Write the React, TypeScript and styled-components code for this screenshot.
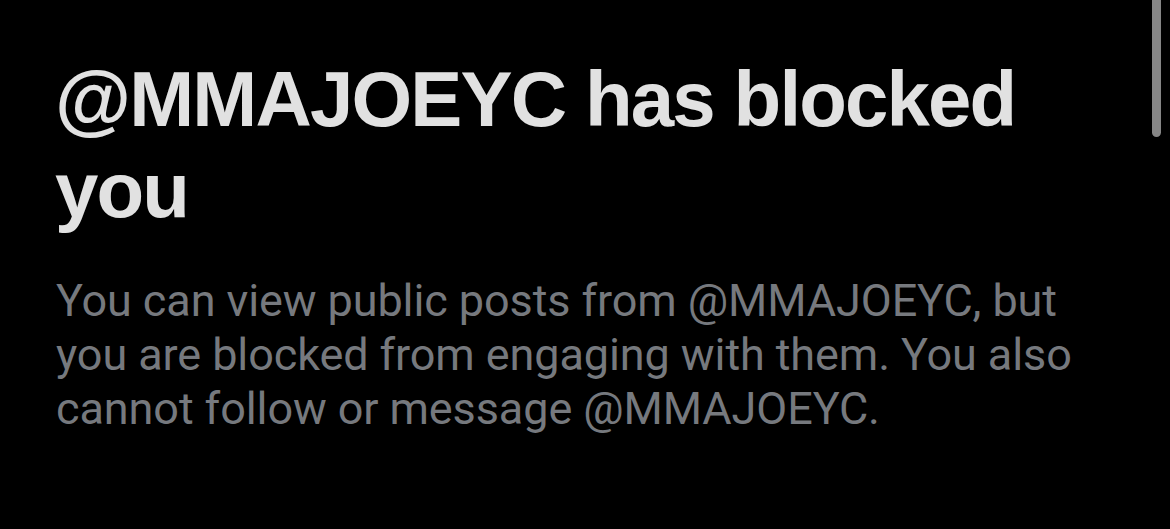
import styled, { createGlobalStyle } from "styled-components";

const Global = createGlobalStyle`
  html, body {
    margin: 0;
    padding: 0;
    background: #000;
  }
`;

const Screen = styled.div`
  width: 1170px;
  height: 529px;
  background: #000;
  position: relative;
  overflow: hidden;
  display: flex;
  flex-direction: column;
  padding: 54px 0 0 55px;
  box-sizing: border-box;
`;

const Title = styled.h1`
  margin: 0;
  width: 1000px;
  font-family: "Liberation Sans", Arial, sans-serif;
  font-weight: 700;
  font-size: 78px;
  line-height: 91px;
  letter-spacing: -1.85px;
  color: #e1e1e1;
`;

const Body = styled.p`
  margin: 38px 0 0 1px;
  width: 1040px;
  font-family: Roboto, "Liberation Sans", sans-serif;
  font-weight: 400;
  font-size: 45px;
  line-height: 54px;
  letter-spacing: -0.1px;
  color: #76797e;
`;

const ScrollThumb = styled.div`
  position: absolute;
  top: 0;
  right: 9px;
  width: 9px;
  height: 137px;
  border-radius: 0 0 5px 5px;
  background: #868686;
`;

function App() {
  return (
    <Screen>
      <Global />
      <Title>@MMAJOEYC has blocked you</Title>
      <Body>
        You can view public posts from @MMAJOEYC, but you are blocked from
        engaging with them. You also cannot follow or message @MMAJOEYC.
      </Body>
      <ScrollThumb />
    </Screen>
  );
}

export default App;
